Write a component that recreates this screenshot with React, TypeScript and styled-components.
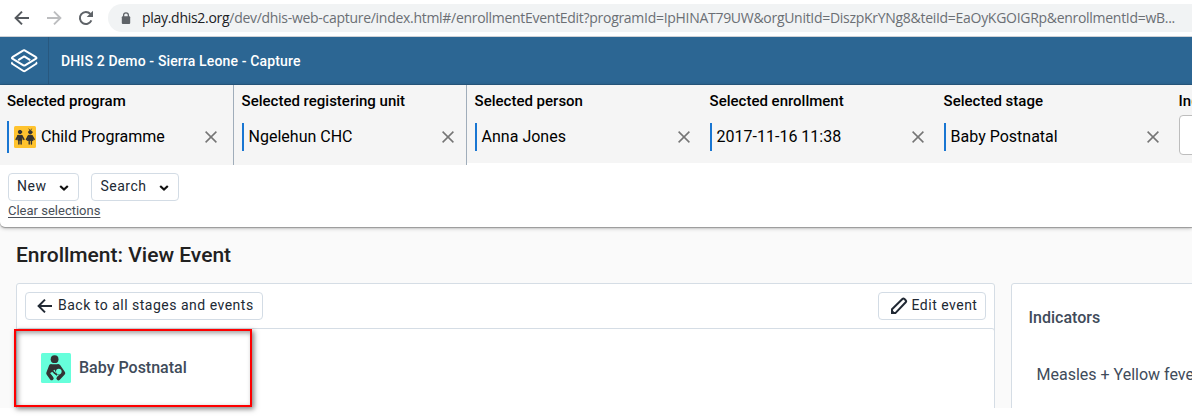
import React from "react";
import styled, { createGlobalStyle } from "styled-components";

const GlobalStyle = createGlobalStyle`
  *, *::before, *::after { box-sizing: border-box; }
  html, body { margin: 0; background: #fff; overflow: hidden; }
  body { font-family: Roboto, "Liberation Sans", sans-serif; color: #000; }
  svg { display: block; flex: none; }
`;

const Window = styled.div`
  width: 1192px;
  height: 417px;
  overflow: hidden;
  position: relative;
  background: #fff;
`;

const BrowserBar = styled.div`
  display: flex;
  align-items: flex-start;
  height: 37px;
  padding: 4px 0 0 14px;
  border-bottom: 1px solid #cfd2d6;
  background: #fff;
`;

const NavIcons = styled.div`
  display: flex;
  align-items: center;
  gap: 16px;
  width: 94px;
  height: 28px;
`;

const AddressField = styled.div`
  display: flex;
  align-items: center;
  flex: 1;
  height: 28px;
  padding-left: 13px;
  border-radius: 14px 0 0 14px;
  background: #f1f3f4;
`;

const Url = styled.span`
  margin-left: 11px;
  font: 14px/20px "Open Sans", "Noto Sans", sans-serif;
  letter-spacing: -0.29px;
  white-space: nowrap;
  color: #6b6f74;
`;

const UrlHost = styled.span`
  color: #202124;
`;

const HeaderBar = styled.header`
  display: flex;
  align-items: center;
  height: 48px;
  background: #2c6693;
  border-bottom: 1px solid #275a82;
  color: #fff;
`;

const LogoCell = styled.div`
  display: flex;
  align-items: center;
  width: 49px;
  height: 47px;
  padding-left: 10px;
  border-right: 1px solid #28587f;
`;

const HeaderTitle = styled.div`
  margin-left: 12px;
  font-size: 14px;
  font-weight: 500;
  line-height: 18px;
  letter-spacing: 0.14px;
  white-space: nowrap;
`;

const SelectorCard = styled.section`
  height: 142px;
  background: #fff;
  border-radius: 0 0 0 5px;
  box-shadow: 0 1px 1px #999, 0 1px 4px rgba(0, 0, 0, 0.3);
  position: relative;
`;

const SelectorRow = styled.div`
  display: grid;
  grid-template-columns: 234px 233px 235px 234px 235px 234px;
  align-items: start;
  height: 80px;
  overflow: hidden;
`;

const SelectorCell = styled.div<{ $divided?: boolean; $clearInset?: number }>`
  height: ${(p) => (p.$divided ? 80 : 78)}px;
  padding: 7px ${(p) => p.$clearInset ?? 12}px 0 7.6px;
  background: #f5f5f5;
  border-right: ${(p) => (p.$divided ? "1px solid #a0adba" : "none")};

  &:first-child {
    padding-left: 7px;
  }
`;

const SelectorLabel = styled.div`
  font-size: 15px;
  font-weight: 500;
  line-height: 18px;
  white-space: nowrap;
`;

const SelectorValue = styled.div`
  display: flex;
  align-items: center;
  height: 32px;
  margin-top: 11px;
`;

const ValueText = styled.div<{ $tall?: boolean }>`
  display: flex;
  align-items: center;
  flex: 1;
  gap: 5px;
  height: ${(p) => (p.$tall ? 32 : 28)}px;
  padding-left: 5px;
  border-left: 2px solid #1976d2;
  font-size: 16px;
  line-height: 20px;
  white-space: nowrap;
`;

const EmptySelect = styled.div`
  width: 200px;
  height: 40px;
  margin-top: 5px;
  border: 1px solid #bdbdbd;
  border-radius: 4px;
  background: #fff;
`;

const ActionRow = styled.div`
  display: flex;
  gap: 12px;
  padding: 8px 8px 0;
`;

const Button = styled.button<{ $width: number; $pad?: number }>`
  display: flex;
  align-items: center;
  width: ${(p) => p.$width}px;
  height: 28px;
  padding: 0 0 2px ${(p) => p.$pad ?? 8}px;
  border: 1px solid #d3dce5;
  border-radius: 4px;
  background: #fff;
  color: #212934;
  font: 14px/18px Roboto, "Liberation Sans", sans-serif;
  letter-spacing: 0.5px;
  white-space: nowrap;
`;

const Caret = styled.span`
  margin: 3px 9px 0 auto;
`;

const ClearLink = styled.a`
  display: block;
  width: max-content;
  margin: 2px 0 0 8px;
  font-size: 13px;
  line-height: 16px;
  color: #494f58;
  text-decoration: underline;
  text-underline-offset: 2px;
`;

const Content = styled.main`
  height: 181px;
  padding: 16px 0 0 16px;
  background: #fafafa;
  overflow: hidden;
`;

const PageTitle = styled.h1`
  margin: 0;
  font-size: 21px;
  font-weight: 500;
  line-height: 24px;
  color: #212121;
  white-space: nowrap;
`;

const Columns = styled.div`
  display: flex;
  gap: 16px;
  margin-top: 16px;
`;

const Panel = styled.section<{ $width: number }>`
  flex: none;
  width: ${(p) => p.$width}px;
  height: 160px;
  border: 1px solid #d5dde5;
  border-radius: 3px;
  background: #fff;
`;

const PanelToolbar = styled.div`
  display: flex;
  justify-content: space-between;
  height: 44px;
  padding: 8px 8px 0;
`;

const StageBody = styled.div`
  display: flex;
  align-items: flex-start;
  gap: 8px;
  height: 130px;
  margin: 0 -1px;
  padding: 24px 0 0 24px;
  border: 1px solid #d5dde5;
  border-radius: 3px;
`;

const StageName = styled.div`
  font-size: 16px;
  font-weight: 500;
  line-height: 30px;
  color: #404b5a;
`;

const IndicatorTitle = styled.div`
  margin: 23px 0 0 16.5px;
  font-size: 16px;
  font-weight: 500;
  line-height: 22px;
  color: #404b5a;
`;

const IndicatorText = styled.div`
  margin: 35px 0 0 24.5px;
  font-size: 16px;
  line-height: 22px;
  white-space: nowrap;
  color: #404b5a;
`;

const Highlight = styled.div`
  position: absolute;
  left: 14px;
  top: 329px;
  width: 238px;
  height: 78px;
  border: 2px solid #fe0000;
  box-shadow: 2px 2px 5px rgba(0, 0, 0, 0.5), inset 2px 2px 5px rgba(0, 0, 0, 0.4);
`;

const BackIcon = ({ color }: { color: string }) => (
  <svg width="16" height="16" viewBox="0 0 16 16" fill="none" stroke={color} strokeWidth="2">
    <path d="M15 8H2.2M8 1.6 1.6 8 8 14.4" />
  </svg>
);

const ForwardIcon = () => (
  <svg width="16" height="16" viewBox="0 0 16 16" fill="none" stroke="#bcbdbf" strokeWidth="1.9">
    <path d="M1 8h12.8M8 1.6 14.4 8 8 14.4" />
  </svg>
);

const ReloadIcon = () => (
  <svg width="16" height="16" viewBox="0 0 16 16">
    <path d="M13.4 10.4A6 6 0 1 1 12.4 4" fill="none" stroke="#5f6368" strokeWidth="2" />
    <path d="M15 .7V7H8.7z" fill="#5f6368" />
  </svg>
);

const LockIcon = () => (
  <svg width="10" height="13" viewBox="0 0 10 13">
    <rect x=".8" y="4.2" width="8.4" height="7.8" rx="1" fill="#5f6368" />
    <path d="M2.6 5V3.2a2.4 2.4 0 0 1 4.8 0V5" fill="none" stroke="#5f6368" strokeWidth="1.3" />
  </svg>
);

const LayersLogo = () => (
  <svg width="28" height="26" viewBox="0 0 28 26" fill="none" stroke="#fff" strokeWidth="2" strokeLinejoin="round">
    <path d="M14.2 2.2 26 9.2q1 .7 0 1.4l-11 6.7q-.8.5-1.6 0l-11-6.7q-1-.7 0-1.4L13.4 2.4q.4-.3.8-.2Z" />
    <path d="M8.2 12.2 14.2 8.4l6 3.8" />
    <path d="M2.6 14.4q-1.3.8 0 1.6l10.8 7q.8.5 1.6 0l10.8-7q1.3-.8 0-1.6" />
  </svg>
);

const ChildrenIcon = () => (
  <svg width="22" height="22" viewBox="0 0 22 22">
    <rect width="22" height="22" rx="1.5" fill="#ffc32e" />
    <g fill="#333" stroke="#333" strokeLinecap="round">
      <circle cx="6" cy="6" r="1.7" />
      <path d="M4 9.4h4L7.8 14.2H4.2z" />
      <path d="M4.1 9.8 2.1 13.4M7.900 9.8 9.900 13.4" strokeWidth="1.5" fill="none" />
      <path d="M4.900 13.5v4.600M7.100 13.500v4.600" strokeWidth="1.500" />
      <circle cx="16.300" cy="6.200" r="1.700" />
      <path d="M14.800 3l1.500 1.200L17.800 3" strokeWidth=".7" fill="none" />
      <path d="M14.700 9.400h3.200l1.200 5h-5.600z" />
      <path d="M14.500 9.800 12.400 13.400M18.100 9.800 20.200 13.400" strokeWidth="1.400" fill="none" />
      <path d="M15.200 14.500v3.600M17.400 14.500v3.600" strokeWidth="1.400" />
    </g>
  </svg>
);

const BabyIcon = () => (
  <svg width="30" height="30" viewBox="0 0 30 30">
    <rect width="30" height="30" rx="1.5" fill="#66ffdb" />
    <circle cx="13.6" cy="6.2" r="3.9" fill="#333" />
    <path d="M9.600 11.300h8l3.900 5.700-3.500 5-9.500-2.600-1-2.500z" fill="#333" />
    <path
      d="M9.900 13.200 7.200 20.300l3.500 5M17.500 13.200l4.800 7-4.900 5.200"
      fill="none"
      stroke="#333"
      strokeWidth="3.900"
      strokeLinecap="round"
      strokeLinejoin="round"
    />
    <path d="M9.300 20.300l1.800-1.600 4.400 3.800-2.400 1.500z" fill="#66ffdb" />
    <circle cx="17.800" cy="18.600" r="2.800" fill="#66ffdb" />
    <path d="M13 17l1.600 3.400 2.600 2.200" fill="none" stroke="#66ffdb" strokeWidth="1.300" />
    <path d="M12.800 19.400l3.400 2.800" fill="none" stroke="#333" strokeWidth="1.600" />
  </svg>
);

const ClearIcon = () => (
  <svg width="12" height="12" viewBox="0 0 12 12" fill="none" stroke="#757575" strokeWidth="1.5">
    <path d="M.6.6l10.800 10.800M11.400.6.6 11.400" />
  </svg>
);

const ChevronIcon = () => (
  <svg width="10" height="6" viewBox="0 0 10 6" fill="none" stroke="#111" strokeWidth="2.2">
    <path d="M1.200 1 5 4.500 8.800 1" />
  </svg>
);

const PencilIcon = () => (
  <svg width="18" height="18" viewBox="0 0 18 18">
    <path
      d="M2 15.900V12.300L12.400 2q1-.9 2 0l1.300 1.300q.9 1 0 2L5.600 15.900Z"
      fill="#fff"
      stroke="#212934"
      strokeWidth="2"
      strokeLinejoin="round"
    />
    <path d="M1 17v-5.200L6.200 17Z" fill="#212934" />
  </svg>
);

const BackSlot = styled.span`
  margin: 2px 5px 0 -1px;
`;

const PencilSlot = styled.span`
  margin: 2px 3.5px 0 0;
`;

const selections = [
  { label: "Selected program", value: "Child Programme", icon: true, divided: true, clearInset: 16 },
  { label: "Selected registering unit", value: "Ngelehun CHC", divided: true },
  { label: "Selected person", value: "Anna Jones" },
  { label: "Selected enrollment", value: "2017-11-16 11:38" },
  { label: "Selected stage", value: "Baby Postnatal" },
];

export default function App() {
  return (
    <Window>
      <GlobalStyle />
      <BrowserBar>
        <NavIcons>
          <BackIcon color="#55595e" />
          <ForwardIcon />
          <ReloadIcon />
        </NavIcons>
        <AddressField>
          <LockIcon />
          <Url>
            <UrlHost>play.dhis2.org</UrlHost>
            /dev/dhis-web-capture/index.html#/enrollmentEventEdit?programId=IpHINAT79UW&amp;orgUnitId=DiszpKrYNg8&amp;teiId=EaOyKGOIGRp&amp;enrollmentId=wB...
          </Url>
        </AddressField>
      </BrowserBar>
      <HeaderBar>
        <LogoCell>
          <LayersLogo />
        </LogoCell>
        <HeaderTitle>DHIS 2 Demo - Sierra Leone - Capture</HeaderTitle>
      </HeaderBar>
      <SelectorCard>
        <SelectorRow>
          {selections.map((s) => (
            <SelectorCell key={s.label} $divided={s.divided} $clearInset={s.clearInset}>
              <SelectorLabel>{s.label}</SelectorLabel>
              <SelectorValue>
                <ValueText $tall={s.icon}>
                  {s.icon && <ChildrenIcon />}
                  {s.value}
                </ValueText>
                <ClearIcon />
              </SelectorValue>
            </SelectorCell>
          ))}
          <SelectorCell>
            <SelectorLabel>Indicators</SelectorLabel>
            <EmptySelect />
          </SelectorCell>
        </SelectorRow>
        <ActionRow>
          <Button $width={71}>
            New
            <Caret>
              <ChevronIcon />
            </Caret>
          </Button>
          <Button $width={88} $pad={8.5}>
            Search
            <Caret>
              <ChevronIcon />
            </Caret>
          </Button>
        </ActionRow>
        <ClearLink>Clear selections</ClearLink>
      </SelectorCard>
      <Content>
        <PageTitle>Enrollment: View Event</PageTitle>
        <Columns>
          <Panel $width={979}>
            <PanelToolbar>
              <Button $width={238} $pad={12}>
                <BackSlot>
                  <BackIcon color="#212934" />
                </BackSlot>
                Back to all stages and events
              </Button>
              <Button $width={108} $pad={11}>
                <PencilSlot>
                  <PencilIcon />
                </PencilSlot>
                Edit event
              </Button>
            </PanelToolbar>
            <StageBody>
              <BabyIcon />
              <StageName>Baby Postnatal</StageName>
            </StageBody>
          </Panel>
          <Panel $width={300}>
            <IndicatorTitle>Indicators</IndicatorTitle>
            <IndicatorText>Measles + Yellow fever doses</IndicatorText>
          </Panel>
        </Columns>
      </Content>
      <Highlight />
    </Window>
  );
}
